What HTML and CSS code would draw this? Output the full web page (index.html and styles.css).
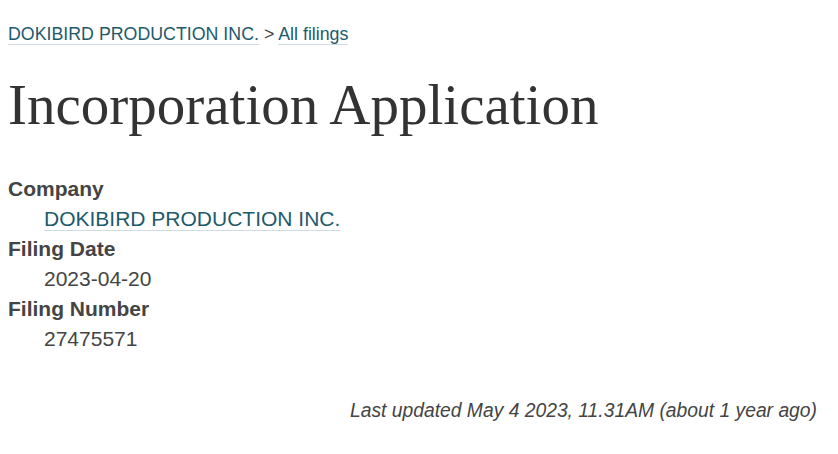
FILE: index.html
```html
<!DOCTYPE html>
<html lang="en">
<head>
    <meta charset="UTF-8">
    <meta name="viewport" content="width=device-width, initial-scale=1.0">
    <title>Incorporation Application - DOKIBIRD PRODUCTION INC.</title>
    <link rel="stylesheet" href="styles.css">
</head>
<body>
    <div class="page">
        <nav class="crumbs">
            <a href="#">DOKIBIRD PRODUCTION INC.</a> &gt; <a href="#">All filings</a>
        </nav>

        <h1 class="title">Incorporation Application</h1>

        <dl class="details">
            <dt>Company</dt>
            <dd><a href="#">DOKIBIRD PRODUCTION INC.</a></dd>
            <dt>Filing Date</dt>
            <dd>2023-04-20</dd>
            <dt>Filing Number</dt>
            <dd>27475571</dd>
        </dl>

        <p class="updated">Last updated May 4 2023, 11.31AM (about 1 year ago)</p>
    </div>
</body>
</html>
```

FILE: styles.css
```css
body {
    font-family: "Liberation Sans", Arial, sans-serif;
    color: #444;
    margin: 0;
    padding: 0 21px 0 8px;
    background: #fff;
}
a {
    color: #1d5a6c;
    text-decoration: none;
    border-bottom: 1px solid #cfdde2;
}
.crumbs {
    font-size: 17.8px;
    padding-top: 24px;
    line-height: 20px;
}
.title {
    font-family: "Liberation Serif", "Times New Roman", serif;
    font-weight: normal;
    font-size: 57px;
    color: #333;
    margin: 26px 0 34px;
    line-height: 70px;
}
.details {
    font-size: 21px;
    line-height: 30px;
    margin: 0;
}
.details dt {
    font-weight: bold;
}
.details dd {
    margin-left: 36px;
}
.updated {
    font-style: italic;
    font-size: 19.3px;
    text-align: right;
    margin: 46px 0 0;
}
```
